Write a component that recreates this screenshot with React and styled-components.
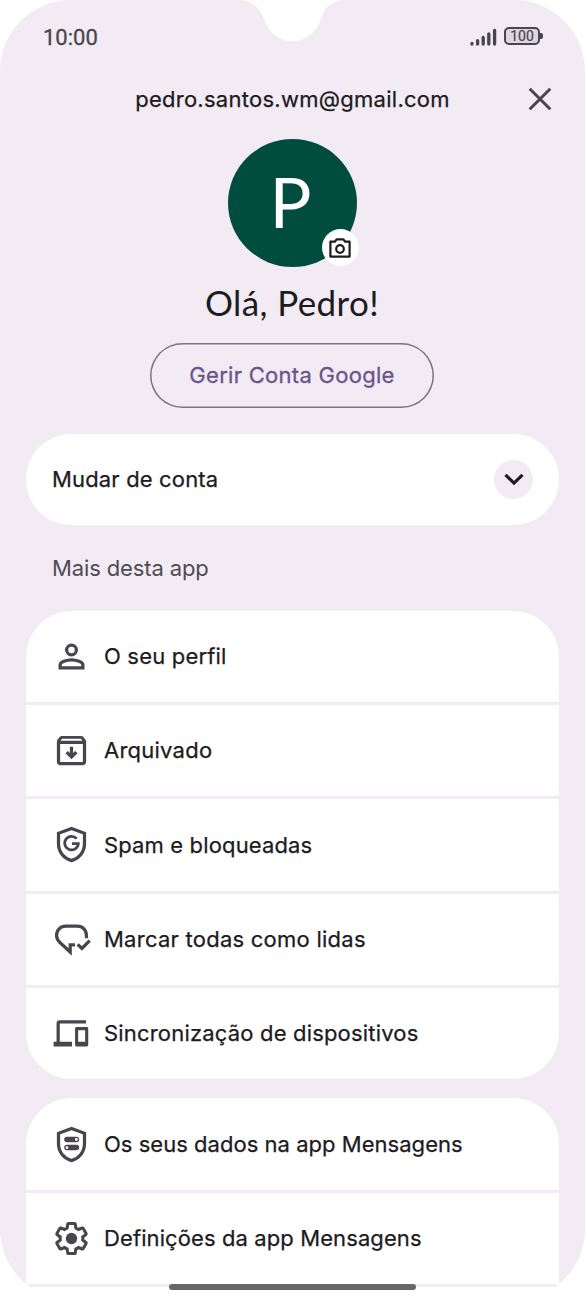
import styled, { createGlobalStyle } from "styled-components";

const appItems = [
  { icon: PersonIcon, label: "O seu perfil", spacing: 0.18 },
  { icon: ArchiveIcon, label: "Arquivado", spacing: 0.24 },
  { icon: ShieldGIcon, label: "Spam e bloqueadas", spacing: 0.14 },
  { icon: MarkReadIcon, label: "Marcar todas como lidas", spacing: 0.25 },
  { icon: DevicesIcon, label: "Sincronização de dispositivos", spacing: 0.18 },
];

const settingsItems = [
  { icon: ShieldDataIcon, label: "Os seus dados na app Mensagens", spacing: 0.03 },
  { icon: GearIcon, label: "Definições da app Mensagens", spacing: 0.1 },
];

export default function App() {
  return (
    <>
      <GlobalStyle />
      <Phone>
        <Notch viewBox="0 0 105 41">
          <path
            fill="#fff"
            d="M0 0C13 1 19 8 23 16C27 30 37 41 52.5 41C68 41 78 30 82 16C85 7 91 1 105 0Z"
          />
        </Notch>
        <StatusBar>
          <Time>10:00</Time>
          <StatusIcons>
            <SignalIcon />
            <Battery>100</Battery>
          </StatusIcons>
        </StatusBar>
        <Header>
          <Email>pedro.santos.wm@gmail.com</Email>
          <CloseButton aria-label="Fechar">
            <svg width="24" height="24" viewBox="0 0 24 24">
              <path d="M1.700 1.700L22.300 22.300M22.300 1.700L1.700 22.300" stroke="#49454e" strokeWidth="3" />
            </svg>
          </CloseButton>
        </Header>
        <Profile>
          <Avatar>
            P
            <CameraBadge>
              <CameraIcon />
            </CameraBadge>
          </Avatar>
          <Greeting>Olá, Pedro!</Greeting>
          <ManageButton>Gerir Conta Google</ManageButton>
        </Profile>
        <SwitchAccount>
          <Label $spacing={0.16}>Mudar de conta</Label>
          <Expand>
            <svg width="20" height="13" viewBox="0 0 20 13">
              <path d="M1.500 1.800L10 10.100L18.500 1.800" fill="none" stroke="#1d1b20" strokeWidth="3.200" />
            </svg>
          </Expand>
        </SwitchAccount>
        <SectionTitle>Mais desta app</SectionTitle>
        <MenuGroup>
          {appItems.map((item) => (
            <MenuItem key={item.label} {...item} />
          ))}
        </MenuGroup>
        <MenuGroup $open>
          {settingsItems.map((item) => (
            <MenuItem key={item.label} {...item} />
          ))}
        </MenuGroup>
        <NavBar>
          <NavHandle />
        </NavBar>
      </Phone>
    </>
  );
}

function MenuItem({ icon: Icon, label, spacing }) {
  return (
    <Row>
      <Icon />
      <Label $spacing={spacing}>{label}</Label>
    </Row>
  );
}

function PersonIcon() {
  return (
    <ItemIcon viewBox="0 0 24 24">
      <circle cx="12" cy="8" r="3" />
      <path d="M5 19V17C5 15.300 9 14 12 14S19 15.300 19 17V19Z" />
    </ItemIcon>
  );
}

function ArchiveIcon() {
  return (
    <ItemIcon viewBox="0 0 24 24">
      <Solid
        fillRule="evenodd"
        d="M20.540 5.230l-1.390-1.680C18.880 3.210 18.470 3 18 3H6c-.47 0-.88.21-1.160.55L3.460 5.230C3.170 5.570 3 6.020 3 6.500V19c0 1.100.9 2 2 2h14c1.100 0 2-.9 2-2V6.500c0-.48-.17-.93-.46-1.270zM6.240 4.700h11.520l1 1.300H5.240zM5 19V8h14v11z"
      />
      <Solid d="M12 17.400l3.700-3.700-1.400-1.400-1.300 1.300V9.700h-2v3.900l-1.300-1.300-1.400 1.400z" />
    </ItemIcon>
  );
}

function ShieldOutline() {
  return <path d="M12 2.200L4 5.100V11.600C4 16.600 7.300 20.500 12 21.900C16.700 20.500 20 16.600 20 11.600V5.100Z" />;
}

function ShieldGIcon() {
  return (
    <ItemIcon viewBox="0 0 24 24">
      <ShieldOutline />
      <path strokeWidth="1.700" d="M15.200 8.400A4.200 4.200 0 1 0 16.200 11.500H12.300" />
    </ItemIcon>
  );
}

function MarkReadIcon() {
  return (
    <ItemIcon viewBox="0 0 24 24">
      <path d="M21.200 11.300V9.600C21.200 6.300 19 3.800 15.500 3.800H8.500C5.100 3.800 2.800 6.300 2.800 9.400C2.800 11.600 3.700 12.900 5.200 14.200L11.200 19.700V15.300H14.200" />
      <path d="M15.800 15L18.400 17.500L23.200 12.700" />
    </ItemIcon>
  );
}

function DevicesIcon() {
  return (
    <ItemIcon viewBox="0 0 24 24">
      <Solid d="M2.800 17V5.800C2.800 4.700 3.600 3.900 4.700 3.900H20.900V5.900H4.800V17H12.300V20H1V17Z" />
      <Solid
        fillRule="evenodd"
        d="M15.100 8H21.400C21.900 8 22.300 8.400 22.300 8.900V19.100C22.300 19.600 21.900 20 21.400 20H15.100C14.600 20 14.200 19.600 14.200 19.100V8.900C14.200 8.400 14.600 8 15.100 8ZM16.100 10V17H20.400V10Z"
      />
    </ItemIcon>
  );
}

function ShieldDataIcon() {
  return (
    <ItemIcon viewBox="0 0 24 24">
      <ShieldOutline />
      <Solid
        fillRule="evenodd"
        d="M9.200 7.200H15A1.700 1.700 0 0 1 15 10.600H9.200A1.700 1.700 0 0 1 9.200 7.200ZM15 8A.9.9 0 0 0 15 9.800A.9.9 0 0 0 15 8Z"
      />
      <Solid
        fillRule="evenodd"
        d="M9.200 12.200H15A1.700 1.700 0 0 1 15 15.600H9.200A1.700 1.700 0 0 1 9.200 12.200ZM9.200 13A.9.9 0 0 0 9.200 14.800A.9.9 0 0 0 9.200 13Z"
      />
    </ItemIcon>
  );
}

function GearIcon() {
  return (
    <ItemIcon viewBox="0 0 24 24">
      <path
        transform="translate(12 12) scale(.93) translate(-12 -12)"
        d="M19.430 12.980c.04-.32.07-.64.07-.98 0-.34-.03-.66-.07-.98l2.110-1.650c.19-.15.24-.42.12-.64l-2-3.460c-.09-.16-.26-.25-.44-.25-.06 0-.12.01-.17.03l-2.490 1c-.52-.4-1.080-.73-1.690-.98l-.38-2.650C14.460 2.180 14.250 2 14 2h-4c-.25 0-.46.18-.49.42l-.38 2.650c-.61.25-1.170.59-1.690.98l-2.490-1c-.06-.02-.12-.03-.18-.03-.17 0-.34.09-.43.25l-2 3.460c-.13.22-.07.49.12.64l2.110 1.650c-.04.32-.07.65-.07.98 0 .33.03.66.07.98l-2.110 1.650c-.19.15-.24.42-.12.64l2 3.460c.09.16.26.25.44.25.06 0 .12-.01.17-.03l2.490-1c.52.4 1.080.73 1.690.98l.38 2.650c.03.24.24.42.49.42h4c.25 0 .46-.18.49-.42l.38-2.650c.61-.25 1.170-.59 1.690-.98l2.490 1c.06.02.12.03.18.03.17 0 .34-.09.43-.25l2-3.460c.12-.22.07-.49-.12-.64l-2.110-1.650z"
      />
      <Solid as="circle" cx="12" cy="12" r="3.500" />
    </ItemIcon>
  );
}

function CameraIcon() {
  return (
    <svg width="22" height="20" viewBox="0 0 22 20" fill="none" stroke="#1d1b20" strokeWidth="2.200">
      <path strokeLinejoin="round" d="M1.400 3.700H5.800L7.600 1.400H14.400L16.200 3.700H20.600V18.600H1.400Z" />
      <circle cx="11" cy="11" r="3.800" />
    </svg>
  );
}

function SignalIcon() {
  return (
    <svg width="27" height="18" viewBox="0 0 27 18" stroke="#49454e" strokeWidth="3.300" strokeLinecap="round">
      <path d="M2 16V15.500M7.600 16V12.700M13.200 16V9.300M18.800 16V6M24.600 16V2.300" />
    </svg>
  );
}

const GlobalStyle = createGlobalStyle`
  * {
    box-sizing: border-box;
  }
  body {
    margin: 0;
    background-color: #ffffff;
  }
`;

const Phone = styled.main`
  position: relative;
  display: flex;
  flex-direction: column;
  width: 585px;
  height: 1300px;
  overflow: hidden;
  border-radius: 71px;
  background-color: #f2ebf3;
  color: #1d1b20;
  font-family: Inter, sans-serif;
`;

const Notch = styled.svg`
  position: absolute;
  top: 0;
  left: 240px;
  width: 105px;
  height: 41px;
`;

const StatusBar = styled.div`
  display: flex;
  justify-content: space-between;
  align-items: center;
  height: 74px;
  padding: 0 42px 0 43px;
`;

const Time = styled.span`
  color: #49454e;
  font-family: Roboto, sans-serif;
  font-size: 22px;
  -webkit-text-stroke: 0.3px #49454e;
`;

const StatusIcons = styled.div`
  display: flex;
  align-items: center;
  gap: 7px;
`;

const Battery = styled.span`
  position: relative;
  top: -1px;
  width: 36px;
  height: 18px;
  margin-right: 3px;
  border: 2px solid #49454e;
  border-radius: 5px;
  background-color: #ded4e2;
  color: #49454e;
  font: 400 14px/15px Roboto, sans-serif;
  letter-spacing: 0;
  text-align: center;
  -webkit-text-stroke: 0.2px #49454e;

  &::after {
    content: "";
    position: absolute;
    top: 4px;
    right: -5px;
    width: 3px;
    height: 6px;
    border-radius: 0 2px 2px 0;
    background-color: #49454e;
  }
`;

const Header = styled.header`
  display: grid;
  grid-template-columns: 1fr auto 1fr;
  align-items: center;
  height: 50px;
  padding: 0 33.5px;
`;

const Email = styled.h1`
  grid-column: 2;
  margin: 0;
  font-weight: 400;
  font-size: 22px;
  letter-spacing: 0.27px;
  -webkit-text-stroke: 0.25px currentColor;
`;

const CloseButton = styled.button`
  justify-self: end;
  display: flex;
  padding: 0;
  border: 0;
  background: none;
`;

const Profile = styled.section`
  display: flex;
  flex-direction: column;
  align-items: center;
  padding: 15px 1px 0 0;
`;

const Avatar = styled.div`
  position: relative;
  width: 129px;
  height: 128px;
  padding-right: 3px;
  border-radius: 50%;
  background-color: #004d40;
  color: #ffffff;
  font: 400 70px/125px Lato, sans-serif;
  text-align: center;
`;

const CameraBadge = styled.span`
  position: absolute;
  right: -2px;
  bottom: 1px;
  display: flex;
  align-items: center;
  justify-content: center;
  width: 37px;
  height: 37px;
  border-radius: 50%;
  background-color: #ffffff;
`;

const Greeting = styled.h2`
  margin: 14px 0 0;
  font: 400 35px/42px Lato, sans-serif;
  letter-spacing: 0.4px;
`;

const ManageButton = styled.button`
  width: 284px;
  height: 65px;
  margin-top: 20px;
  padding: 0 0 1px;
  border: 0;
  border-radius: 33px;
  box-shadow: inset 0 0 0 1.5px #7a757f;
  background: none;
  color: #6b538c;
  font: 400 22px Inter, sans-serif;
  letter-spacing: 0.28px;
  -webkit-text-stroke: 0.3px currentColor;
`;

const SwitchAccount = styled.div`
  display: flex;
  align-items: center;
  justify-content: space-between;
  height: 91px;
  margin: 26px 26px 0;
  padding: 0 26px;
  border-radius: 46px;
  background-color: #ffffff;
`;

const Label = styled.span`
  padding-bottom: 0.6px;
  font-size: 22px;
  letter-spacing: ${(props) => props.$spacing}px;
  -webkit-text-stroke: 0.25px currentColor;
`;

const Expand = styled.span`
  display: flex;
  align-items: center;
  justify-content: center;
  width: 39px;
  height: 39px;
  border-radius: 50%;
  background-color: #f2ebf3;
`;

const SectionTitle = styled.h3`
  height: 86px;
  margin: 0;
  padding-left: 52px;
  color: #4f4b54;
  font-weight: 400;
  font-size: 22px;
  line-height: 86px;
  letter-spacing: -0.12px;
`;

const MenuGroup = styled.ul`
  display: flex;
  flex-direction: column;
  gap: 3px;
  flex-shrink: 0;
  margin: 0 26px 19.5px;
  padding: 0;
  overflow: hidden;
  border-radius: ${(props) => (props.$open ? "46px 46px 0 0" : "46px")};
  list-style: none;

  & + & {
    margin-bottom: 3px;
  }
`;

const Row = styled.li`
  display: flex;
  align-items: center;
  gap: 13px;
  height: 91.2px;
  padding-left: 26px;
  background-color: #ffffff;
`;

const ItemIcon = styled.svg`
  width: 39px;
  height: 39px;
  fill: none;
  stroke: #49454e;
  stroke-width: 2;
`;

const Solid = styled.path`
  fill: #49454e;
  stroke: none;
`;

const NavBar = styled.div`
  display: flex;
  flex: 1;
  justify-content: center;
  background-color: #ffffff;
`;

const NavHandle = styled.span`
  z-index: 1;
  width: 247px;
  height: 6px;
  margin-top: -3px;
  border-radius: 3px;
  background-color: #666568;
`;
